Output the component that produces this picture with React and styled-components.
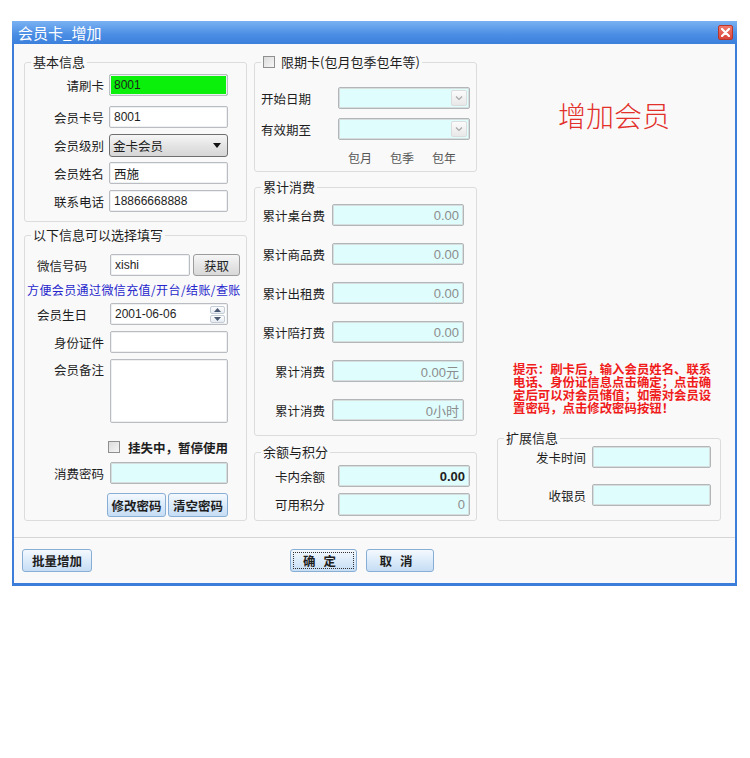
import React from 'react';
import styled, { createGlobalStyle } from 'styled-components';

const Global = createGlobalStyle`
  body {
    margin: 0;
    background: #fff;
    font-family: "Noto Sans CJK SC", "Liberation Sans", sans-serif;
    color: #1e1e1e;
  }
`;

const Page = styled.div`
  min-height: 758px;
  box-sizing: border-box;
  padding: 21px 0 0 12px;
`;

const Window = styled.div`
  width: 725px;
  box-sizing: border-box;
  background: #f9f9f9;
  border-left: 2px solid #3b7dd8;
  border-right: 2px solid #3b7dd8;
  border-bottom: 3px solid #3b7dd8;
`;

const TitleBar = styled.div`
  height: 23px;
  display: flex;
  align-items: center;
  justify-content: space-between;
  margin: 0 -2px;
  padding: 0 4px 0 6px;
  background: linear-gradient(#7ab2f2, #4a8de4 60%, #3b80dc);
  color: #fff;
  font-size: 15px;
`;

const CloseBtn = styled.div`
  width: 15px;
  height: 15px;
  box-sizing: border-box;
  border: 1px solid #b8362c;
  border-radius: 2px;
  background: linear-gradient(#f07a6c, #d9463a);
  display: flex;
  align-items: center;
  justify-content: center;
`;

const Body = styled.div`
  display: flex;
  padding: 11px 14px 16px 10px;
`;

const Column = styled.div`
  width: ${p => p.$w}px;
  margin-left: ${p => p.$ml || 0}px;
  display: flex;
  flex-direction: column;
`;

const Group = styled.fieldset`
  margin: 0;
  margin-top: ${p => p.$mt || 0}px;
  padding: 0;
  min-width: 0;
  height: ${p => p.$h}px;
  box-sizing: border-box;
  border: 1px solid #dcdcdc;
  border-radius: 3px;
`;

const Legend = styled.legend`
  font-size: 13px;
  line-height: 14px;
  padding: 0 2px;
  margin-left: 6px;
  display: flex;
  align-items: center;
  gap: 6px;
`;

const Row = styled.div`
  display: flex;
  align-items: ${p => (p.$top ? 'flex-start' : 'center')};
  height: ${p => p.$h || 22}px;
  margin-top: ${p => p.$mt || 0}px;
  padding-left: ${p => p.$pl || 0}px;
`;

// label cell: $w is the whole cell up to the field, $gap the space before it
const Label = styled.div`
  width: ${p => p.$w}px;
  flex: none;
  box-sizing: border-box;
  font-size: 12.5px;
  text-align: ${p => (p.$left ? 'left' : 'right')};
  padding-left: ${p => p.$pl || 0}px;
  padding-right: ${p => p.$gap || 0}px;
  padding-top: ${p => p.$pt || 0}px;
  white-space: nowrap;
`;

const Field = styled.input`
  width: ${p => p.$w}px;
  height: ${p => p.$h || 22}px;
  box-sizing: border-box;
  margin: 0;
  padding: 0 4px;
  border: 1px solid ${p => (p.$cyan ? '#b3b6b8' : '#b9bcc0')};
  box-shadow: inset 0 0 0 1px ${p => (p.$cyan ? '#d6dede' : '#eef0f2')};
  border-radius: 2px;
  background: ${p => p.$bg || '#fff'};
  font-family: "Liberation Sans", "Noto Sans CJK SC", sans-serif;
  font-size: ${p => p.$fs || 12}px;
  font-weight: ${p => (p.$bold ? 700 : 400)};
  color: ${p => p.$color || '#1e1e1e'};
  text-align: ${p => (p.$right ? 'right' : 'left')};
  outline: none;
`;

const Memo = styled.textarea`
  width: 118px;
  height: 64px;
  box-sizing: border-box;
  margin: 0;
  border: 1px solid #b9bcc0;
  box-shadow: inset 0 0 0 1px #eef0f2;
  border-radius: 2px;
  background: #fff;
  resize: none;
  outline: none;
`;

const Select = styled.div`
  width: 119px;
  height: 23px;
  box-sizing: border-box;
  border: 1px solid #6f6f6f;
  border-radius: 3px;
  background: linear-gradient(#f6f6f6, #e4e4e4 50%, #d6d6d6);
  display: flex;
  align-items: center;
  justify-content: space-between;
  padding: 0 6px 0 3px;
  font-size: 12.5px;
`;

const Boxed = styled.div`
  width: ${p => p.$w}px;
  height: 22px;
  box-sizing: border-box;
  border: 1px solid ${p => (p.$cyan ? '#b3b6b8' : '#b9bcc0')};
  box-shadow: inset 0 0 0 1px ${p => (p.$cyan ? '#d6dede' : '#eef0f2')};
  border-radius: 2px;
  background: ${p => (p.$cyan ? '#dffdfd' : '#fff')};
  display: flex;
  align-items: center;
  justify-content: space-between;
  padding: 0 2px 0 4px;
  font-family: "Liberation Sans", "Noto Sans CJK SC", sans-serif;
  font-size: 12px;
`;

const DropBtn = styled.div`
  width: 16px;
  height: 16px;
  box-sizing: border-box;
  border: 1px solid #dcdcdc;
  border-radius: 2px;
  background: linear-gradient(#fbfbfb, #e8e8e8);
  display: flex;
  align-items: center;
  justify-content: center;
`;

const Spin = styled.div`
  display: flex;
  flex-direction: column;
  gap: 1px;
`;

const SpinBtn = styled.div`
  width: 15px;
  height: 8px;
  box-sizing: border-box;
  border: 1px solid #c4ccd6;
  border-radius: 2px;
  background: linear-gradient(#fdfdfd, #e6ebf1);
  display: flex;
  align-items: center;
  justify-content: center;
`;

const Button = styled.button`
  width: ${p => p.$w}px;
  height: ${p => p.$h || 23}px;
  margin: 0;
  margin-left: ${p => p.$ml || 0}px;
  padding: 0;
  box-sizing: border-box;
  border: 1px solid ${p => (p.$gray ? '#9c9c9c' : '#88aed6')};
  border-radius: 3px;
  background: ${p =>
    p.$gray
      ? 'linear-gradient(#f6f6f6, #e6e6e6 50%, #d8d8d8)'
      : 'linear-gradient(#f4f9fe, #dcebfa 50%, #c6ddf4)'};
  font-family: "Noto Sans CJK SC", sans-serif;
  font-size: 12.5px;
  font-weight: ${p => (p.$gray ? 400 : 700)};
  color: #1e1e1e;
  letter-spacing: ${p => p.$ls || 0}px;
  outline: ${p => (p.$focus ? '1px dotted #333' : 'none')};
  outline-offset: -4px;
`;

const Check = styled.span`
  display: inline-block;
  width: 12px;
  height: 12px;
  box-sizing: border-box;
  border: 1px solid #8e8f8f;
  background: linear-gradient(135deg, #dcdcdc, #f6f6f6);
  margin-right: ${p => p.$mr || 0}px;
`;

const CheckText = styled.span`
  font-size: 12.5px;
  font-weight: 700;
`;

const Note = styled.div`
  margin-top: ${p => p.$mt || 0}px;
  padding-left: 2px;
  font-size: 12px;
  line-height: 14px;
  height: 14px;
  color: #2626cc;
  white-space: nowrap;
  letter-spacing: 0.4px;
`;

const Periods = styled.div`
  display: flex;
  gap: 18px;
  height: 14px;
  line-height: 14px;
  margin-top: 11px;
  padding-left: 93px;
  font-size: 12px;
  color: #555;
`;

const Heading = styled.div`
  margin-top: 44px;
  padding-left: 61px;
  font-size: 28px;
  font-weight: 300;
  line-height: 32px;
  color: #e2302a;
`;

const Hint = styled.div`
  margin-top: auto;
  margin-left: 16px;
  width: 200px;
  font-size: 12.4px;
  line-height: 13px;
  font-weight: 700;
  color: #f01c1c;
`;

const Footer = styled.div`
  height: 46px;
  box-sizing: border-box;
  border-top: 1px solid #d6d6d6;
  display: flex;
  align-items: flex-start;
  padding: 11px 8px 0;
`;

const Chevron = () => (
  <svg width="8" height="6" viewBox="0 0 8 6">
    <path d="M1 1.5 L4 4.5 L7 1.5" fill="none" stroke="#a8a8a8" strokeWidth="1.2" />
  </svg>
);

const Arrow = ({ up }) => (
  <svg width="7" height="4" viewBox="0 0 7 4">
    <path d={up ? 'M0 4 L3.5 0 L7 4 Z' : 'M0 0 L3.5 4 L7 0 Z'} fill="#4a5a72" />
  </svg>
);

const totals = [
  ['累计桌台费', '0.00'],
  ['累计商品费', '0.00'],
  ['累计出租费', '0.00'],
  ['累计陪打费', '0.00'],
  ['累计消费', '0.00元'],
  ['累计消费', '0小时'],
];

export default function App() {
  return (
    <>
      <Global />
      <Page>
        <Window>
          <TitleBar>
            <span>会员卡_增加</span>
            <CloseBtn>
              <svg width="9" height="9" viewBox="0 0 9 9">
                <path d="M1 1 L8 8 M8 1 L1 8" stroke="#fff" strokeWidth="2.2" strokeLinecap="round" />
              </svg>
            </CloseBtn>
          </TitleBar>

          <Body>
            <Column $w={223}>
              <Group $h={167}>
                <Legend>基本信息</Legend>
                <Row $mt={5}>
                  <Label $w={84} $gap={5}>请刷卡</Label>
                  <Field $w={119} $bg="#0af00a" defaultValue="8001" readOnly />
                </Row>
                <Row $mt={10}>
                  <Label $w={84} $gap={5}>会员卡号</Label>
                  <Field $w={119} defaultValue="8001" readOnly />
                </Row>
                <Row $mt={6} $h={23}>
                  <Label $w={84} $gap={5}>会员级别</Label>
                  <Select>
                    <span>金卡会员</span>
                    <svg width="8" height="5" viewBox="0 0 8 5">
                      <path d="M0 0 L8 0 L4 5 Z" fill="#111" />
                    </svg>
                  </Select>
                </Row>
                <Row $mt={5}>
                  <Label $w={84} $gap={5}>会员姓名</Label>
                  <Field $w={119} $fs={12.5} defaultValue="西施" readOnly />
                </Row>
                <Row $mt={6}>
                  <Label $w={84} $gap={5}>联系电话</Label>
                  <Field $w={119} defaultValue="18866668888" readOnly />
                </Row>
              </Group>

              <Group $h={293} $mt={6}>
                <Legend>以下信息可以选择填写</Legend>
                <Row $mt={12}>
                  <Label $w={85} $left $pl={12}>微信号码</Label>
                  <Field $w={80} defaultValue="xishi" readOnly />
                  <Button $gray $w={47} $h={22} $ml={3}>获取</Button>
                </Row>
                <Note $mt={7}>方便会员通过微信充值/开台/结账/查账</Note>
                <Row $mt={6}>
                  <Label $w={85} $left $pl={12}>会员生日</Label>
                  <Boxed $w={118}>
                    <span>2001-06-06</span>
                    <Spin>
                      <SpinBtn><Arrow up /></SpinBtn>
                      <SpinBtn><Arrow /></SpinBtn>
                    </Spin>
                  </Boxed>
                </Row>
                <Row $mt={6}>
                  <Label $w={85} $gap={6}>身份证件</Label>
                  <Field $w={118} readOnly />
                </Row>
                <Row $mt={6} $h={64} $top>
                  <Label $w={85} $gap={6} $pt={1}>会员备注</Label>
                  <Memo readOnly />
                </Row>
                <Row $mt={17} $h={14} $pl={83}>
                  <Check $mr={8} />
                  <CheckText>挂失中，暂停使用</CheckText>
                </Row>
                <Row $mt={8}>
                  <Label $w={85} $gap={6}>消费密码</Label>
                  <Field $w={118} $bg="#dffdfd" $cyan readOnly />
                </Row>
                <Row $mt={9} $h={24} $pl={82}>
                  <Button $w={59} $h={24}>修改密码</Button>
                  <Button $w={60} $h={24} $ml={2}>清空密码</Button>
                </Row>
              </Group>
            </Column>

            <Column $w={223} $ml={7}>
              <Group $h={117}>
                <Legend>
                  <Check />
                  <span>限期卡(包月包季包年等)</span>
                </Legend>
                <Row $mt={18}>
                  <Label $w={83} $left $pl={6}>开始日期</Label>
                  <Boxed $w={132} $cyan>
                    <span />
                    <DropBtn><Chevron /></DropBtn>
                  </Boxed>
                </Row>
                <Row $mt={9}>
                  <Label $w={83} $left $pl={6}>有效期至</Label>
                  <Boxed $w={132} $cyan>
                    <span />
                    <DropBtn><Chevron /></DropBtn>
                  </Boxed>
                </Row>
                <Periods>
                  <span>包月</span>
                  <span>包季</span>
                  <span>包年</span>
                </Periods>
              </Group>

              <Group $h={256} $mt={8}>
                <Legend>累计消费</Legend>
                {totals.map(([k, v], i) => (
                  <Row key={i} $mt={i === 0 ? 10 : 17}>
                    <Label $w={77} $gap={7}>{k}</Label>
                    <Field $w={132} $bg="#dffdfd" $cyan $right $fs={13} $color="#8c8c8c" value={v} readOnly />
                  </Row>
                ))}
              </Group>

              <Group $h={76} $mt={9}>
                <Legend>余额与积分</Legend>
                <Row $mt={6}>
                  <Label $w={83} $gap={13}>卡内余额</Label>
                  <Field $w={132} $bg="#dffdfd" $cyan $right $fs={13} $bold $color="#222" value="0.00" readOnly />
                </Row>
                <Row $mt={6} $h={23}>
                  <Label $w={83} $gap={13}>可用积分</Label>
                  <Field $w={132} $h={23} $bg="#dffdfd" $cyan $right $fs={13} $color="#8c8c8c" value="0" readOnly />
                </Row>
              </Group>
            </Column>

            <Column $w={224} $ml={20}>
              <Heading>增加会员</Heading>
              <Hint>提示：刷卡后，输入会员姓名、联系电话、身份证信息点击确定；点击确定后可以对会员储值；如需对会员设置密码，点击修改密码按钮！</Hint>
              <Group $h={90} $mt={16}>
                <Legend>扩展信息</Legend>
                <Row $mt={1}>
                  <Label $w={94} $gap={6}>发卡时间</Label>
                  <Field $w={119} $bg="#dffdfd" $cyan readOnly />
                </Row>
                <Row $mt={16}>
                  <Label $w={94} $gap={6}>收银员</Label>
                  <Field $w={119} $bg="#dffdfd" $cyan readOnly />
                </Row>
              </Group>
            </Column>
          </Body>

          <Footer>
            <Button $w={70}>批量增加</Button>
            <Button $w={67} $ml={198} $ls={8} $focus>确定</Button>
            <Button $w={68} $ml={9} $ls={8}>取消</Button>
          </Footer>
        </Window>
      </Page>
    </>
  );
}
